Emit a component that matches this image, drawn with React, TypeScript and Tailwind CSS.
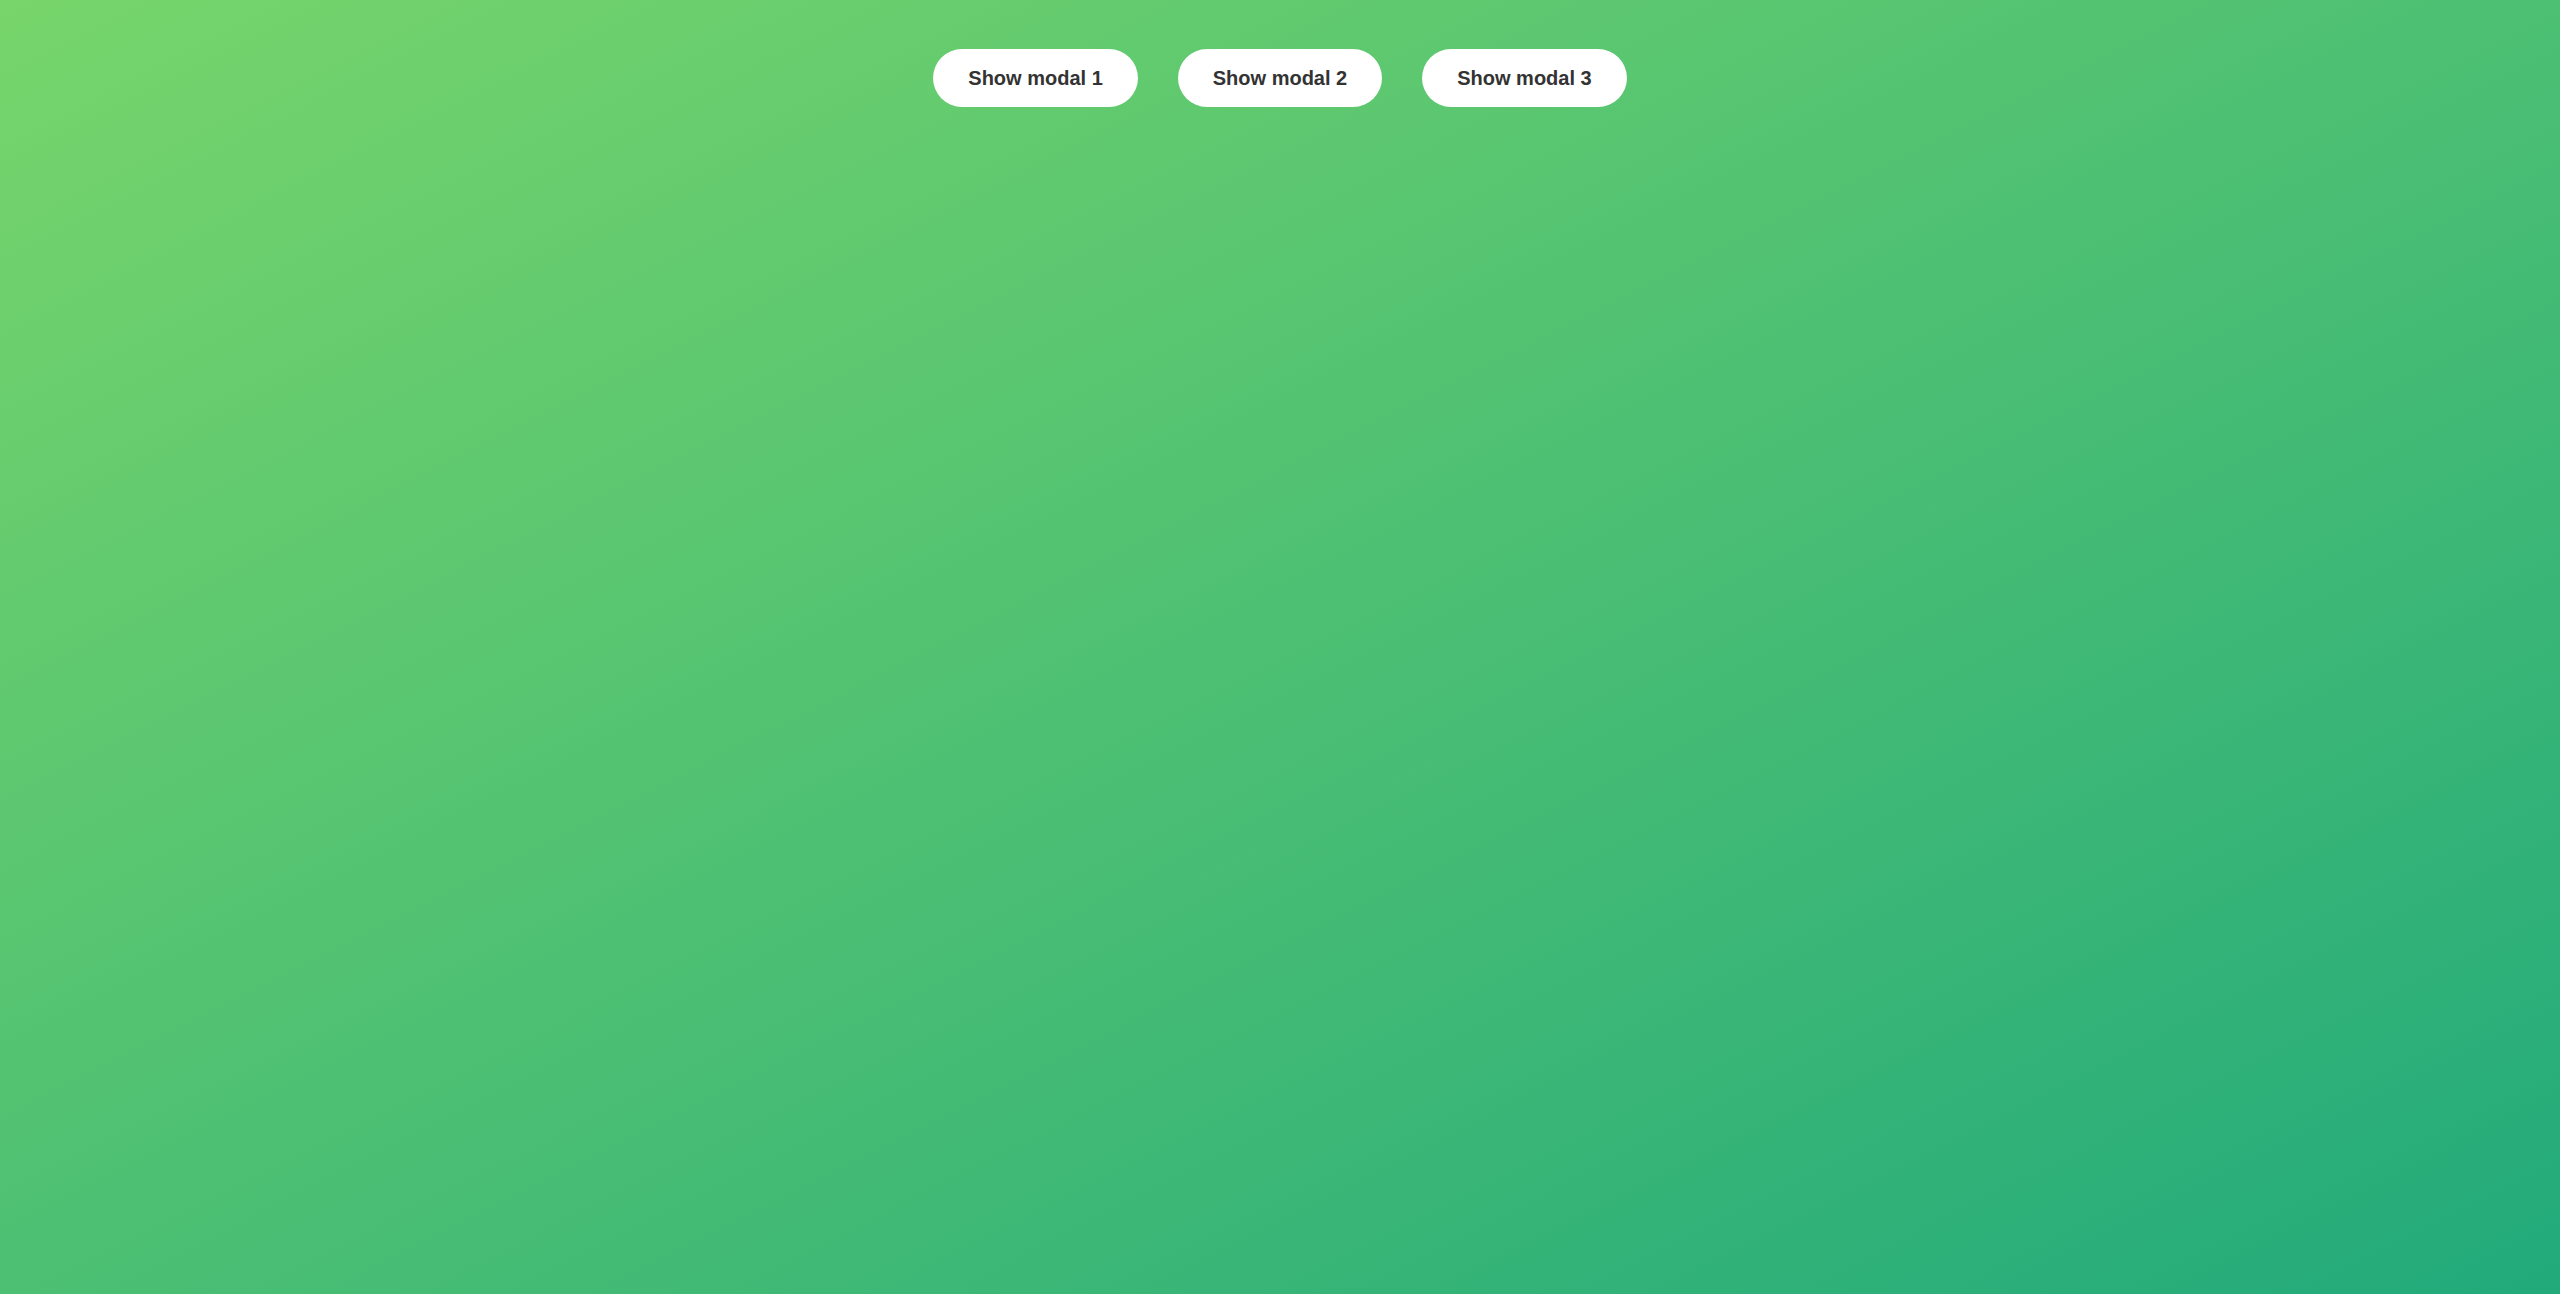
export default function App() {
  const labels = ["Show modal 1", "Show modal 2", "Show modal 3"];
  return (
    <div className="h-screen w-full bg-[linear-gradient(to_bottom_right,#77d56b,#22aa7b)] flex justify-center items-start gap-10 pt-[49px]" style={{ fontFamily: '"Liberation Sans", Arial, sans-serif' }}>
      {labels.map((l) => (
        <button key={l} className="bg-white rounded-full px-[35px] h-[58px] text-[20px] font-bold text-[#333333] leading-none">
          {l}
        </button>
      ))}
    </div>
  );
}
